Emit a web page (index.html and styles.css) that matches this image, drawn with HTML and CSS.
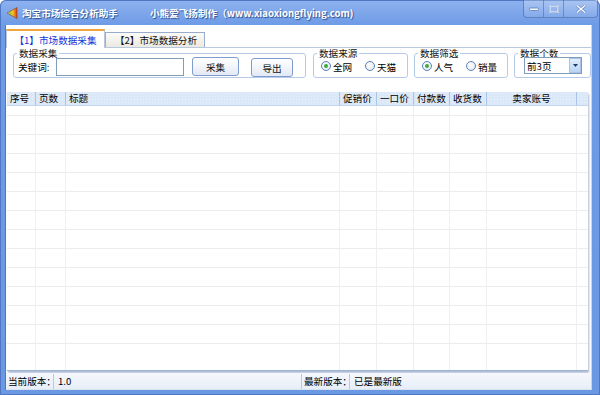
FILE: index.html
```html
<!DOCTYPE html>
<html lang="zh-CN">
<head>
  <meta charset="UTF-8" />
  <title>淘宝市场综合分析助手</title>
  <link rel="stylesheet" href="styles.css">
</head>
<body>
  <div class="window">
    <div class="titlebar">
      <svg class="app-icon" width="11" height="12" viewBox="0 0 11 12">
        <defs>
          <linearGradient id="cone" x1="0" y1="0" x2="1" y2="0">
            <stop offset="0" stop-color="#e8e8d0"/>
            <stop offset="0.3" stop-color="#9ccc3c"/>
            <stop offset="0.55" stop-color="#f5c823"/>
            <stop offset="0.8" stop-color="#f07b1c"/>
            <stop offset="1" stop-color="#d8341c"/>
          </linearGradient>
        </defs>
        <polygon points="0,6 10,0.5 10,11.5" fill="url(#cone)" stroke="#7a4a20" stroke-width="0.6"/>
      </svg>
      <span class="title">淘宝市场综合分析助手</span>
      <span class="subtitle">小熊爱飞扬制作（www.xiaoxiongflying.com)</span>
      <div class="caption-btns">
        <div class="cap-btn">
          <svg width="10" height="6" viewBox="0 0 10 6"><rect x="0.5" y="2" width="9" height="2.5" rx="1" fill="#f4f7fc" stroke="#5a7cb8" stroke-width="0.8"/></svg>
        </div>
        <div class="cap-btn">
          <svg width="10" height="8" viewBox="0 0 10 8"><rect x="0.8" y="0.8" width="8.4" height="6.4" fill="none" stroke="#f4f7fc" stroke-width="1.6"/><rect x="0.8" y="0.8" width="8.4" height="6.4" fill="none" stroke="#5a7cb8" stroke-width="0.5"/></svg>
        </div>
        <div class="cap-btn close">
          <svg width="10" height="8" viewBox="0 0 10 8"><path d="M1 0.5 L9 7.5 M9 0.5 L1 7.5" stroke="#5a7cb8" stroke-width="2.6"/><path d="M1 0.5 L9 7.5 M9 0.5 L1 7.5" stroke="#f4f7fc" stroke-width="1.6"/></svg>
        </div>
      </div>
    </div>

    <div class="client">
      <div class="tabs">
        <div class="tab active">【1】市场数据采集</div>
        <div class="tab">【2】市场数据分析</div>
      </div>

      <div class="tab-page">
        <div class="groups">
          <fieldset class="group g-collect">
            <legend>数据采集</legend>
            <label class="field-label">关键词:</label>
            <input class="keyword" type="text">
            <button class="btn btn-collect">采集</button>
            <button class="btn btn-export">导出</button>
          </fieldset>
          <fieldset class="group g-source">
            <legend>数据来源</legend>
            <span class="radio checked"></span><span class="radio-text">全网</span>
            <span class="radio"></span><span class="radio-text last">天猫</span>
          </fieldset>
          <fieldset class="group g-filter">
            <legend>数据筛选</legend>
            <span class="radio checked"></span><span class="radio-text">人气</span>
            <span class="radio"></span><span class="radio-text last">销量</span>
          </fieldset>
          <fieldset class="group g-count">
            <legend>数据个数</legend>
            <div class="combo">
              <span class="combo-text">前3页</span>
              <span class="combo-btn"><svg width="5" height="3" viewBox="0 0 5 3"><polygon points="0,0 5,0 2.5,3" fill="#1f3a66"/></svg></span>
            </div>
          </fieldset>
        </div>

        <div class="grid">
          <div class="grid-head">
            <div class="col c-no">序号</div>
            <div class="col c-page">页数</div>
            <div class="col c-title">标题</div>
            <div class="col c-promo">促销价</div>
            <div class="col c-price">一口价</div>
            <div class="col c-paid">付款数</div>
            <div class="col c-recv">收货数</div>
            <div class="col c-seller center">卖家账号</div>
            <div class="col c-rest"></div>
          </div>
          <div class="grid-body">
            <div class="col c-no"></div>
            <div class="col c-page"></div>
            <div class="col c-title"></div>
            <div class="col c-promo"></div>
            <div class="col c-price"></div>
            <div class="col c-paid"></div>
            <div class="col c-recv"></div>
            <div class="col c-seller"></div>
            <div class="col c-rest"></div>
          </div>
        </div>
      </div>

      <div class="statusbar">
        <span class="status-label">当前版本：</span>
        <span class="status-value first">1.0</span>
        <span class="status-label">最新版本：</span>
        <span class="status-value">已是最新版</span>
      </div>
    </div>
  </div>
</body>
</html>
```

FILE: styles.css
```css
body {
  margin: 0;
  font-family: "Noto Sans CJK SC", "DejaVu Sans", sans-serif;
  font-size: 9.6px;
  color: #000;
  background: #fff;
}
.window {
  width: 600px;
  height: 395px;
  box-sizing: border-box;
  padding: 0 9px 5px 6px;
  background: linear-gradient(#8fb2ef, #6e9be6 25px, #6b98e3);
  border-radius: 6px 6px 0 0;
  display: flex;
  flex-direction: column;
  box-shadow: inset 0 0 0 1px #4f77c4;
}
.titlebar {
  height: 25px;
  display: flex;
  align-items: center;
  color: #fff;
  font-weight: bold;
  text-shadow: 1px 1px 1px #2c4f8f;
}
.app-icon {
  margin-left: 1px;
  margin-top: 1px;
}
.title {
  margin-left: 4px;
  width: 128px;
}
.caption-btns {
  margin-left: auto;
  margin-right: -7px;
  align-self: flex-start;
  display: flex;
  height: 17px;
  border: 1px solid rgba(60, 95, 165, 0.6);
  border-top: none;
  border-radius: 0 0 4px 4px;
  background: linear-gradient(rgba(255,255,255,0.25), rgba(255,255,255,0.08));
}
.cap-btn {
  width: 19px;
  display: flex;
  align-items: center;
  justify-content: center;
  border-right: 1px solid rgba(60, 95, 165, 0.5);
}
.cap-btn.close {
  width: 33px;
  border-right: none;
}
.client {
  flex: 1;
  background: #fff;
  display: flex;
  flex-direction: column;
  box-shadow: 1px 0 0 #c4d6f2, -1px 0 0 #4f77c4;
}
.tabs {
  height: 22px;
  display: flex;
  align-items: flex-end;
}
.tab {
  height: 14px;
  width: 96px;
  padding-left: 2px;
  line-height: 14px;
  text-align: center;
  white-space: nowrap;
  border: 1px solid #9aaccb;
  border-bottom: none;
  background: linear-gradient(#fbfbf8, #ebe9e0);
  color: #111;
}
.tab.active {
  height: 17px;
  width: 97px;
  padding-left: 0;
  line-height: 18px;
  color: #1232d8;
  background: #fff;
  border-color: #b8c8df;
  border-top: 2px solid #f5a43b;
  margin-bottom: -1px;
  position: relative;
  z-index: 1;
}
.tab-page {
  flex: 1;
  display: flex;
  flex-direction: column;
  border-top: 1px solid #b8c8df;
}
.groups {
  height: 42px;
  box-sizing: border-box;
  display: flex;
  padding-left: 7px;
}
.group {
  margin: -1px 0 0 0;
  padding: 3px 6px 6px 6px;
  border: 1px solid #b5cbe9;
  border-radius: 3px;
  display: flex;
  align-items: center;
  height: 20px;
  min-width: 0;
  flex-shrink: 0;
  box-sizing: content-box;
}
.group legend {
  padding: 0 2px;
  margin-left: -3px;
  line-height: 12px;
  color: #111;
  white-space: nowrap;
}
.g-collect { width: 279px; }
.g-source { width: 81px; margin-left: 7px; }
.g-filter { width: 80px; margin-left: 6px; }
.g-count { width: 63px; margin-left: 6px; }
.field-label {
  width: 38px;
  margin-left: -2px;
  white-space: nowrap;
}
.keyword {
  width: 128px;
  height: 18px;
  box-sizing: border-box;
  border: 1px solid #7f9db9;
  margin: 0;
  padding: 0;
}
.btn {
  height: 19px;
  box-sizing: border-box;
  font-family: inherit;
  font-size: inherit;
  border: 1px solid #7e9ccd;
  border-radius: 3px;
  background: linear-gradient(#ffffff, #f2f5fa 50%, #e2e9f4);
  padding: 0;
  color: #111;
}
.btn-collect {
  width: 47px;
  margin-left: 8px;
}
.btn-export {
  width: 42px;
  margin-left: 12px;
  margin-top: 2px;
}
.radio {
  width: 8px;
  height: 8px;
  flex-shrink: 0;
  border: 1px solid #5b82bd;
  border-radius: 50%;
  background: radial-gradient(circle at 40% 40%, #ffffff, #dde4ee);
  display: inline-flex;
  align-items: center;
  justify-content: center;
  margin-left: 1px;
  margin-top: -1px;
}
.radio.checked::after {
  content: "";
  width: 4px;
  height: 4px;
  border-radius: 50%;
  background: #3fa83a;
}
.radio-text {
  margin-left: 2px;
  width: 31px;
  flex-shrink: 0;
  white-space: nowrap;
}
.radio-text.last {
  width: auto;
}
.combo {
  width: 58px;
  height: 17px;
  box-sizing: border-box;
  border: 1px solid #7f9db9;
  margin-left: 3px;
  margin-top: -2px;
  display: flex;
  align-items: center;
}
.combo-text {
  flex: 1;
  padding-left: 2px;
  white-space: nowrap;
}
.combo-btn {
  width: 12px;
  height: 15px;
  box-sizing: border-box;
  border: 1px solid #a9c2e6;
  background: linear-gradient(#e2eefc, #b9d3f3);
  display: flex;
  align-items: center;
  justify-content: center;
}
.grid {
  flex: 1;
  margin: 2px 3px 2px 1px;
  display: flex;
  flex-direction: column;
  border-bottom: 1px solid #9fb4d3;
  box-shadow: 1px 2px 2px rgba(70, 100, 160, 0.45);
}
.grid-head {
  height: 13px;
  display: flex;
  line-height: 13px;
  background-color: #dae8f8;
  background-image: radial-gradient(#e9f2fc 35%, transparent 40%);
  background-size: 3px 3px;
  border-bottom: 1px solid #c3d6ee;
}
.grid-body {
  flex: 1;
  display: flex;
  background: repeating-linear-gradient(to bottom, transparent 0 18px, #ececec 18px 19px);
  background-position: 0 -9px;
}
.col {
  box-sizing: border-box;
  padding-left: 3px;
  white-space: nowrap;
}
.grid-head .col {
  border-right: 1px solid #a8c4e6;
}
.grid-body .col {
  border-right: 1px solid #efefef;
}
.col.center {
  text-align: center;
  padding-left: 0;
}
.c-no { width: 29px; }
.c-page { width: 30px; }
.c-title { width: 274px; }
.c-promo { width: 37px; }
.c-price { width: 37px; }
.c-paid { width: 36px; }
.c-recv { width: 37px; }
.c-seller { width: 90px; }
.c-rest { flex: 1; }
.grid-head .c-rest, .grid-body .c-rest { border-right: none; }
.statusbar {
  height: 17px;
  display: flex;
  align-items: center;
  line-height: 15px;
  padding-top: 1px;
  box-sizing: border-box;
  background: linear-gradient(#f5f8fc, #e7eef8);
  border-bottom: 1px solid #d8e3f2;
  white-space: nowrap;
}
.status-label {
  padding-left: 2px;
  width: 45px;
  border-right: 1px solid #b9c9df;
}
.status-value {
  padding-left: 4px;
}
.status-value.first {
  width: 243px;
  border-right: 1px solid #b9c9df;
}
```
